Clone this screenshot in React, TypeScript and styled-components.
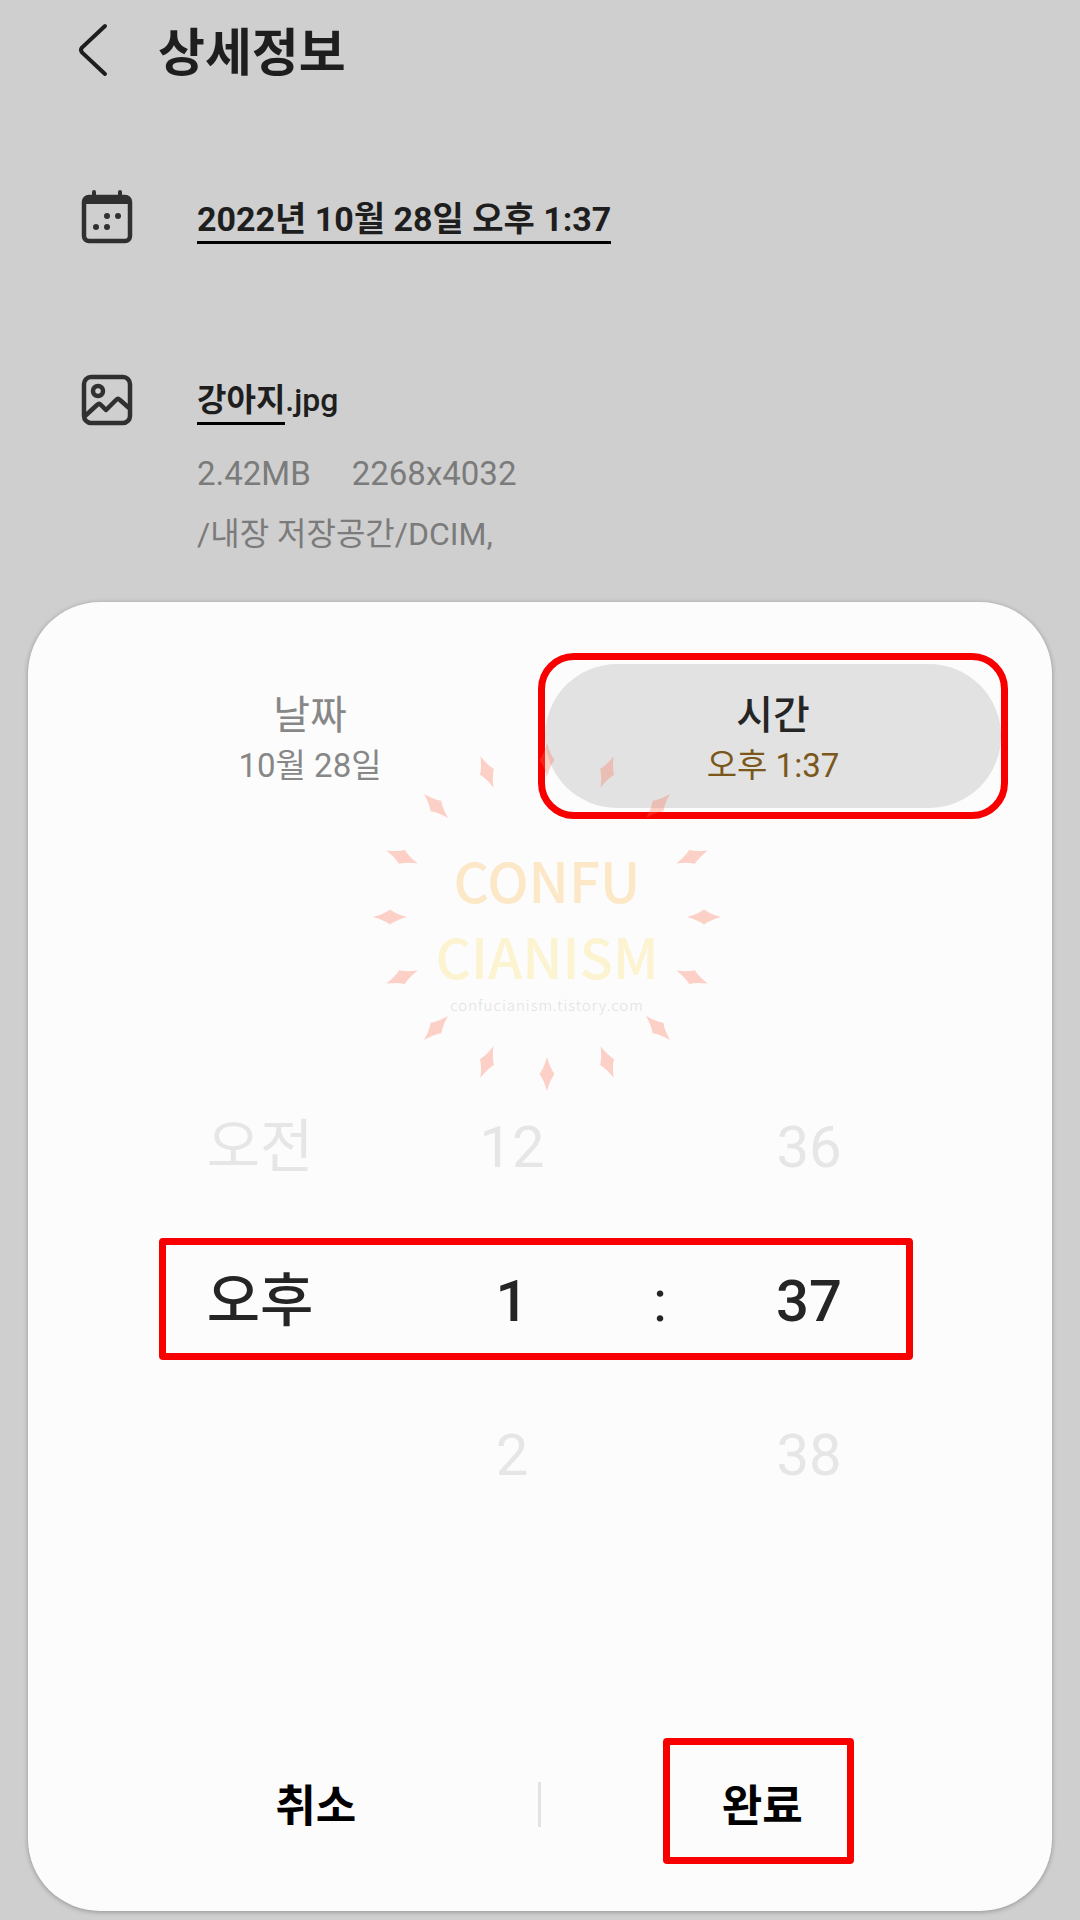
import React, { useState } from "react";
import styled, { createGlobalStyle } from "styled-components";

const GlobalStyle = createGlobalStyle`
  * { box-sizing: border-box; }
  body {
    margin: 0;
    background: #cfcfcf;
    color: #1e1e1e;
    font-family: Roboto, "Noto Sans CJK KR", sans-serif;
  }
  button { font: inherit; color: inherit; background: none; border: 0; padding: 0; cursor: pointer; }
  h1, p { margin: 0; font-weight: 400; }
  a { color: inherit; text-decoration: none; }
`;

const Page = styled.main`
  display: flex;
  flex-direction: column;
  min-height: 100vh;
  padding-bottom: 9px;
`;

const Header = styled.header`
  display: flex;
  align-items: center;
  gap: 44px;
  padding: 20px 76px 84px;
`;

const BackButton = styled.button`
  display: flex;
  width: 38px;
  height: 60px;
`;

const Title = styled.h1`
  padding-top: 4px;
  font-size: 51px;
  line-height: 60px;
  && { font-weight: 700; }
`;

const Details = styled.section`
  display: flex;
  flex-direction: column;
  gap: 125px;
  padding: 21px 80px 38px;
`;

const DetailRow = styled.div`
  display: grid;
  grid-template-columns: 54px 1fr;
  column-gap: 63px;
  align-items: start;
`;

const DetailText = styled.div<{ $size: number }>`
  padding-top: 8px;
  font-size: ${(p) => p.$size}px;
  line-height: 44px;
  font-weight: 500;
`;

const Underlined = styled.a`
  display: inline-block;
  border-bottom: 3px solid #000;
  font-weight: 700;
`;

const FileInfo = styled.div`
  padding-top: 19px;
  color: #7b7b7b;
  font-size: 32px;
  font-weight: 400;
  line-height: 60px;
`;

const Sizes = styled.p`
  display: flex;
  gap: 41px;
  font-size: 33px;
`;

const Sheet = styled.section`
  position: relative;
  display: flex;
  flex: 1;
  flex-direction: column;
  margin: 0 28px;
  padding: 51px 0 47px;
  border-radius: 72px;
  background: #fcfcfc;
  box-shadow: 0 1px 5px rgba(0, 0, 0, 0.3);
`;

const Tabs = styled.div`
  display: grid;
  grid-template-columns: 456fr 470fr;
  padding: 0 44px 0 54px;
`;

const Tab = styled.button<{ $active: boolean }>`
  padding: 4px 0;
  border: 7px solid ${(p) => (p.$active ? "#f80000" : "transparent")};
  border-radius: 36px;
`;

const Pill = styled.span<{ $active: boolean }>`
  display: flex;
  flex-direction: column;
  align-items: center;
  padding: 27px 0 17px;
  border-radius: 72px;
  background: ${(p) => (p.$active ? "#e2e2e2" : "transparent")};
  color: ${(p) => (p.$active ? "#252525" : "#878787")};
`;

const TabName = styled.span<{ $active: boolean }>`
  font-size: 40px;
  line-height: 50px;
  font-weight: ${(p) => (p.$active ? 500 : 400)};
`;

const TabValue = styled.span<{ $active: boolean }>`
  color: ${(p) => (p.$active ? "#7a571b" : "inherit")};
  font-size: 33px;
  line-height: 50px;
`;

const Picker = styled.div`
  display: flex;
  flex-direction: column;
  gap: 32px;
  margin: 265px 139px 0 131px;
`;

const PickerRow = styled.div<{ $selected: boolean }>`
  display: grid;
  grid-template-columns: 188fr 82fr 152fr 144fr 154fr 20fr;
  align-items: center;
  height: 122px;
  padding-top: 4px;
  border: 7px solid ${(p) => (p.$selected ? "#f80000" : "transparent")};
  border-radius: 4px;
  color: ${(p) => (p.$selected ? "#252525" : "#e6e6e6")};
  font-size: 58px;
  line-height: 80px;
  font-weight: ${(p) => (p.$selected ? 500 : 400)};
`;

const Period = styled.button`
  grid-column: 1;
`;

const Hour = styled.button`
  grid-column: 3;
`;

const Colon = styled.span`
  grid-column: 4;
  font-weight: 400;
  text-align: center;
`;

const Minute = styled.button`
  grid-column: 5;
`;

const Actions = styled.footer`
  display: grid;
  grid-template-columns: 1fr 3px 1fr;
  align-items: center;
  margin-top: auto;
  padding: 0 68px 0 66px;
  color: #000;
  font-size: 44px;
  line-height: 60px;
  font-weight: 700;
`;

const Action = styled.button`
  justify-self: center;
  padding: 32px 46px 20px;
`;

const DoneAction = styled(Action)`
  margin-right: 8px;
  padding: 32px 44px 20px 52px;
  border: 7px solid #f80000;
  border-radius: 4px;
`;

const Divider = styled.span`
  height: 45px;
  margin-top: 6px;
  background: #e2e2e2;
`;

const Watermark = styled.div`
  position: absolute;
  top: 139px;
  left: 343px;
  display: flex;
  flex-direction: column;
  align-items: center;
  width: 352px;
  height: 352px;
  padding-top: 100px;
  font-family: "Noto Sans CJK KR", sans-serif;
  opacity: 0.3;
  pointer-events: none;
`;

const Burst = styled.svg`
  position: absolute;
  inset: 0;
`;

const Brand = styled.span<{ $color: string }>`
  color: ${(p) => p.$color};
  font-size: 55px;
  font-weight: 500;
  line-height: 76px;
`;

const Site = styled.span`
  color: #a0a0a0;
  font-size: 15px;
  font-weight: 300;
  letter-spacing: 1px;
  line-height: 24px;
`;

const rays = Array.from({ length: 16 }, (_, i) => i * 22.5);

const rows = [
  { period: "오전", hour: "12", minute: "36", selected: false },
  { period: "오후", hour: "1", minute: "37", selected: true },
  { period: "", hour: "2", minute: "38", selected: false },
];

function CalendarIcon() {
  return (
    <svg width="54" height="56" viewBox="0 0 54 56" fill="none" aria-hidden="true">
      <rect x="4" y="8" width="46" height="44" rx="5" stroke="#303030" strokeWidth="4.500" />
      <path d="M4 12q0-5 5-5h36q5 0 5 5v3H4z" fill="#303030" />
      <path d="M14 3v5M40 3v5" stroke="#303030" strokeWidth="4" strokeLinecap="round" />
      <g fill="#303030">
        <circle cx="27" cy="27" r="3" />
        <circle cx="38" cy="27" r="3" />
        <circle cx="16" cy="38" r="3" />
        <circle cx="27" cy="38" r="3" />
      </g>
    </svg>
  );
}

function ImageIcon() {
  return (
    <svg width="54" height="56" viewBox="0 0 54 56" fill="none" stroke="#303030" strokeWidth="4.500" aria-hidden="true">
      <rect x="4" y="7" width="46" height="46" rx="7" />
      <circle cx="18" cy="21" r="5" />
      <path d="M5 46L17 35q2-2 4 0l5 5L36 30q2-2 4 0l9 8" strokeLinejoin="round" />
    </svg>
  );
}

export default function App() {
  const [tab, setTab] = useState("time");
  const tabs = [
    { id: "date", name: "날짜", value: "10월 28일" },
    { id: "time", name: "시간", value: "오후 1:37" },
  ];

  return (
    <>
      <GlobalStyle />
      <Page>
        <Header>
          <BackButton aria-label="뒤로">
            <svg width="38" height="60" viewBox="0 0 38 60" fill="none" aria-hidden="true">
              <path d="M29 4L6 25.500q-2 2.500 0 5L29 52" stroke="#1e1e1e" strokeWidth="4" strokeLinecap="round" />
            </svg>
          </BackButton>
          <Title>상세정보</Title>
        </Header>

        <Details>
          <DetailRow>
            <CalendarIcon />
            <DetailText $size={34}>
              <Underlined href="#date">2022년 10월 28일 오후 1:37</Underlined>
            </DetailText>
          </DetailRow>
          <DetailRow>
            <ImageIcon />
            <div>
              <DetailText $size={32}>
                <Underlined href="#name">강아지</Underlined>.jpg
              </DetailText>
              <FileInfo>
                <Sizes>
                  <span>2.42MB</span>
                  <span>2268x4032</span>
                </Sizes>
                <p>/내장 저장공간/DCIM,</p>
              </FileInfo>
            </div>
          </DetailRow>
        </Details>

        <Sheet>
          <Tabs role="tablist">
            {tabs.map((t) => {
              const active = t.id === tab;
              return (
                <Tab key={t.id} role="tab" aria-selected={active} $active={active} onClick={() => setTab(t.id)}>
                  <Pill $active={active}>
                    <TabName $active={active}>{t.name}</TabName>
                    <TabValue $active={active}>{t.value}</TabValue>
                  </Pill>
                </Tab>
              );
            })}
          </Tabs>

          <Picker>
            {rows.map((r) => (
              <PickerRow key={r.minute} $selected={r.selected}>
                {r.period && <Period>{r.period}</Period>}
                <Hour>{r.hour}</Hour>
                {r.selected && <Colon>:</Colon>}
                <Minute>{r.minute}</Minute>
              </PickerRow>
            ))}
          </Picker>

          <Actions>
            <Action>취소</Action>
            <Divider />
            <DoneAction>완료</DoneAction>
          </Actions>

          <Watermark>
            <Burst viewBox="-176 -176 352 352" aria-hidden="true">
              {rays.map((angle) => (
                <path
                  key={angle}
                  transform={`rotate(${angle}) translate(0 -157)`}
                  d="M0-17Q3-6 7.500 0Q3 6 0 17Q-3 6-7.500 0Q-3-6 0-17z"
                  fill="#ff6a50"
                />
              ))}
            </Burst>
            <Brand $color="#ffb84e">CONFU</Brand>
            <Brand $color="#ffe070">CIANISM</Brand>
            <Site>confucianism.tistory.com</Site>
          </Watermark>
        </Sheet>
      </Page>
    </>
  );
}
